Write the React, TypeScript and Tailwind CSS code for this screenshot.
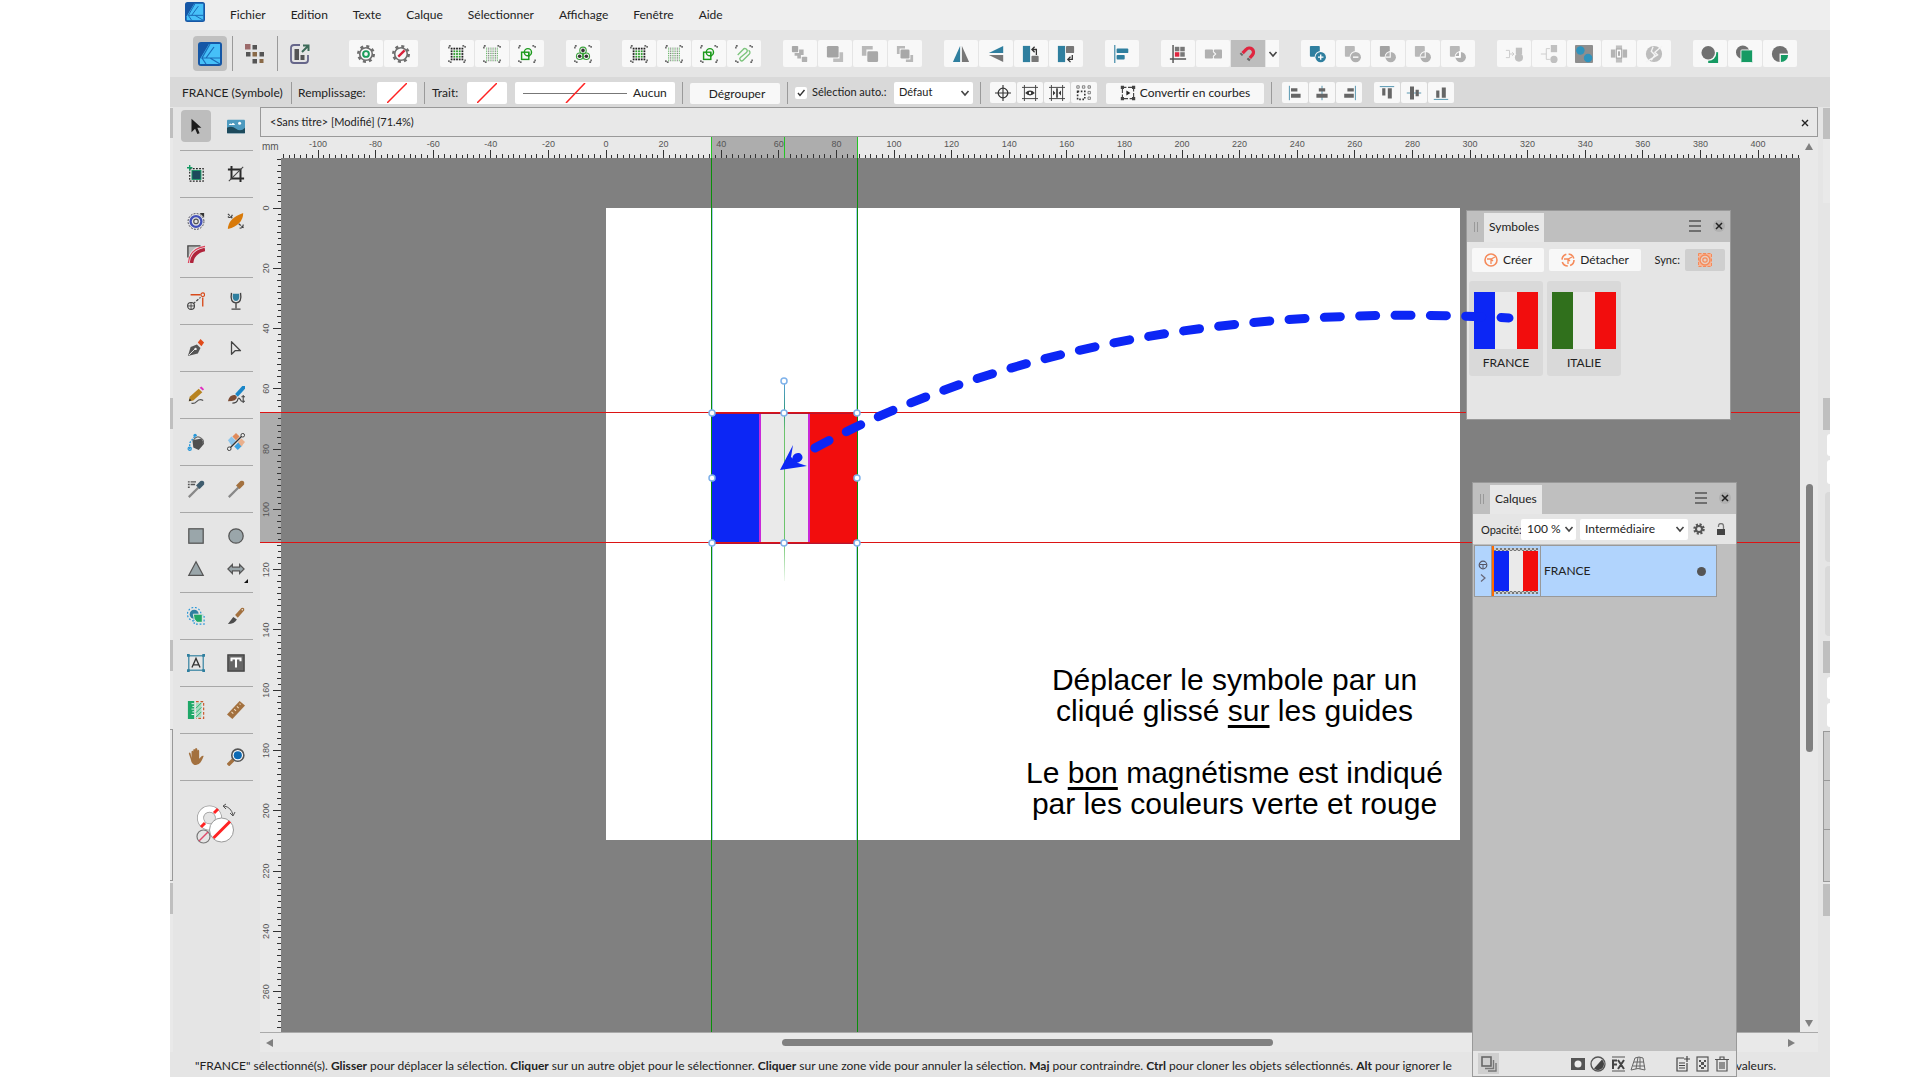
import React from "react";

type Kids = { children?: React.ReactNode };

/* ---------- drawing helpers ---------- */

function Svg({ children, size = "size-[18px]", box = 20 }: Kids & { size?: string; box?: number }) {
  return (
    <svg viewBox={`0 0 ${box} ${box}`} className={`${size} shrink-0`} fill="none" aria-hidden="true">
      {children}
    </svg>
  );
}

const GREY = "#b0b0b0";
const DARK = "#666666";
const TEAL = "#2f7f9f";

function Logo({ size }: { size: string }) {
  return (
    <Svg size={size} box={24}>
      <rect x="0" y="0" width="24" height="24" rx="3" fill="#1557a6" />
      <path d="M11 2 H22 V22 H2 V17 Z" fill="#46c0f8" />
      <path d="M12 2 L4 16 H22 M4 16 L8 22 M8 16 L16 5 M12 16 L22 22" stroke="#1a6cb8" strokeWidth="1.2" />
    </Svg>
  );
}

const Corners = () => (
  <path d="M1 4V1H4M16 1H19V4M19 16V19H16M4 19H1V16" stroke="#333" strokeWidth="1.3" strokeDasharray="2 1" />
);

function GridIcon({ light = false }: { light?: boolean }) {
  const n = [0, 1, 2, 3, 4];
  return (
    <Svg>
      <Corners />
      {light
        ? [0, 1, 2, 3, 4, 5, 6].map((i) => (
            <path key={i} d={`M${4 + i * 2} 3V18`} stroke={i % 2 ? "#555" : "#3aa13a"} strokeWidth="1" strokeDasharray="1 1" />
          ))
        : n.map((i) =>
            n.map((j) => (
              <rect
                key={`${i}-${j}`}
                x={4 + i * 3 - 1}
                y={4 + j * 3 - 1}
                width="2"
                height="2"
                fill={i > 0 && i < 4 && j > 0 && j < 4 ? "#2a9a2a" : "#222"}
              />
            )),
          )}
    </Svg>
  );
}

const ShapeSnap = () => (
  <Svg>
    <Corners />
    <rect x="4" y="8" width="8" height="8" stroke="#1c9a1c" strokeWidth="1.6" />
    <circle cx="11" cy="8" r="4" stroke="#1c9a1c" strokeWidth="1.6" />
    <path d="M12 8V13" stroke="#1c9a1c" strokeWidth="1.4" />
  </Svg>
);

const Gear = ({ bad = false }: { bad?: boolean }) => (
  <Svg>
    <circle cx="10" cy="10" r="8.5" stroke="#6e6e6e" strokeWidth="3" strokeDasharray="3.3 3.38" />
    <circle cx="10" cy="10" r="7" fill="#f8f8f8" stroke="#6e6e6e" strokeWidth="1.8" />
    {bad ? (
      <path d="M7 13L14 6" stroke="#d8203a" strokeWidth="2.6" />
    ) : (
      <circle cx="10" cy="10" r="3.2" stroke="#1a9c5b" strokeWidth="2.2" />
    )}
  </Svg>
);

const Clover = () => (
  <Svg>
    <Corners />
    <circle cx="10" cy="6" r="3.6" stroke="#3aa13a" strokeWidth="1.2" />
    <circle cx="6.3" cy="12.5" r="3.6" stroke="#3aa13a" strokeWidth="1.2" />
    <circle cx="13.7" cy="12.5" r="3.6" stroke="#3aa13a" strokeWidth="1.2" />
    <circle cx="10" cy="6" r="2" fill="#333" />
    <circle cx="6.3" cy="12.5" r="2" fill="#333" />
    <circle cx="13.7" cy="12.5" r="2" fill="#333" />
    <path d="M10 8V16" stroke="#3aa13a" />
  </Svg>
);

const Clip = () => (
  <Svg>
    <Corners />
    <path
      d="M3 11L9 5a2.5 2.5 0 0 1 4 3L6 14a2 2 0 0 0 3 3L16 10a2.5 2.5 0 0 0-1-4"
      stroke="#7cc47c"
      strokeWidth="1.5"
    />
  </Svg>
);

const Order = ({ kind }: { kind: number }) => (
  <Svg>
    {kind === 0 && (
      <>
        <rect x="1" y="1" width="7" height="7" rx="1" fill="#a8a8a8" />
        <path d="M4 9h5V5h5v6h-3v4H7v-3H4z" fill={GREY} />
        <rect x="12" y="13" width="6" height="6" rx="1" fill={GREY} />
      </>
    )}
    {kind === 1 && (
      <>
        <path d="M15 8h4v11H8v-4h7z" fill="#bdbdbd" />
        <rect x="1" y="1" width="13" height="13" rx="1.5" fill="#a4a4a4" />
      </>
    )}
    {kind === 2 && (
      <>
        <path d="M1 1h12v4H6v7H1z" fill="#b8b8b8" />
        <rect x="7" y="7" width="12" height="12" rx="1.5" fill="#a8a8a8" />
      </>
    )}
    {kind === 3 && (
      <>
        <path d="M1 1h9v3H4v6H1z" fill="#b8b8b8" />
        <rect x="5" y="5" width="10" height="10" rx="1.5" fill="#a8a8a8" />
        <path d="M16 11h3v8h-8v-3h5z" fill="#b8b8b8" />
      </>
    )}
  </Svg>
);

const FlipH = () => (
  <Svg>
    <path d="M9 1V19H1z" fill={TEAL} />
    <path d="M11 1V19H19z" fill="#777" />
  </Svg>
);
const FlipV = () => (
  <Svg>
    <path d="M18 1V9H2z" fill={TEAL} />
    <path d="M18 19V11H2z" fill="#777" />
  </Svg>
);
const RotL = () => (
  <Svg>
    <rect x="1" y="1" width="8" height="18" fill={TEAL} />
    <rect x="10.5" y="12" width="8" height="7" rx="1" fill="#777" />
    <path d="M12 5h4v6M14 2l-3 3 3 3" stroke="#333" strokeWidth="1.4" />
  </Svg>
);
const RotR = () => (
  <Svg>
    <rect x="1" y="1" width="8" height="18" fill={TEAL} />
    <rect x="10" y="1" width="9" height="8" rx="1" fill="#777" />
    <path d="M17 11v5h-4M15 13l-3 3 3 3" stroke="#333" strokeWidth="1.4" />
  </Svg>
);
const AlignMain = () => (
  <Svg>
    <path d="M2 0V20" stroke={TEAL} strokeWidth="1.2" />
    <rect x="4" y="4" width="13" height="5" rx="1" fill={TEAL} />
    <rect x="4" y="11" width="9" height="5" rx="1" fill={TEAL} />
  </Svg>
);
const PixelSnap = () => (
  <Svg>
    <path d="M4.5 0V20M1 15.5H19" stroke="#555" strokeWidth="1.6" />
    <rect x="6.5" y="2" width="5" height="5" fill="#777" />
    <rect x="12.5" y="2" width="5" height="5" fill="#777" />
    <rect x="12.5" y="8" width="5" height="5" fill="#777" />
    <rect x="6.5" y="8" width="5" height="5" fill="#e0253f" />
  </Svg>
);
const PixelMove = () => (
  <Svg>
    <rect x="1" y="5" width="9" height="10" rx="1" fill={GREY} />
    <rect x="11" y="5" width="9" height="10" rx="1" fill={GREY} />
    <path d="M10 7l3 3-3 3" fill="#b0b0b0" stroke="#f8f8f8" strokeWidth="1.2" />
  </Svg>
);
const Magnet = () => (
  <Svg>
    <path d="M4 9L8 5a4.500 4.500 0 0 1 7 6L12 14.500" stroke="#e0253f" strokeWidth="3.600" />
    <path d="M3.500 9.500L2 11M11.500 15L10 17" stroke="#666" strokeWidth="3.600" />
  </Svg>
);
const Chevron = () => (
  <svg viewBox="0 0 10 10" className="pointer-events-none size-2.5 shrink-0" fill="none" aria-hidden="true">
    <path d="M1.500 3L5 7L8.500 3" stroke="#444" strokeWidth="1.600" />
  </svg>
);

const Bool = ({ kind }: { kind: number }) => (
  <Svg>
    <rect x="1" y="1" width="11" height="12" rx="1" fill={kind === 0 ? TEAL : kind === 2 ? "#a2a2a2" : "#b8b8b8"} />
    <circle cx="13" cy="13.500" r="6.800" fill="#f8f8f8" />
    <circle cx="13" cy="13.500" r="5.800" fill={kind === 0 ? TEAL : "#b0b0b0"} />
    {kind === 0 && <path d="M13 10.500v6M10 13.500h6" stroke="#fff" strokeWidth="1.500" />}
    {kind === 1 && <path d="M10 13.500h6" stroke="#fff" strokeWidth="1.500" />}
    {kind > 1 && <path d="M7 13.500h5.500V7" stroke="#f8f8f8" strokeWidth="1.300" />}
    {kind === 4 && <path d="M12 7v6H7" stroke="#fff" strokeWidth="1.800" />}
  </Svg>
);

const Compound = ({ kind }: { kind: number }) => (
  <Svg>
    {kind === 0 && (
      <>
        <path d="M1 6h4v8H1M5 10h5M8 8l2 2-2 2" stroke="#c9c9c9" />
        <rect x="12" y="3" width="7" height="7" fill="#c0c0c0" />
        <circle cx="15.500" cy="14" r="4.500" fill="#c0c0c0" />
      </>
    )}
    {kind === 1 && (
      <>
        <path d="M1 10h6M11 4H7v12h4" stroke="#c9c9c9" />
        <rect x="12" y="0" width="7" height="8" fill="#c0c0c0" />
        <circle cx="15.500" cy="16" r="4" fill="#c0c0c0" />
      </>
    )}
    {kind === 2 && (
      <>
        <rect x="0" y="0" width="20" height="20" rx="1" fill="#8e8e8e" />
        <circle cx="6" cy="6" r="4.700" fill="#2f93bd" />
        <circle cx="14.500" cy="14.500" r="4.700" fill="#2f93bd" />
      </>
    )}
    {kind === 3 && (
      <>
        <rect x="6" y="0" width="8" height="20" fill="#c0c0c0" stroke="#f8f8f8" />
        <rect x="1" y="5" width="5" height="9" fill="#b4b4b4" />
        <rect x="14" y="5" width="5" height="9" fill="#b4b4b4" />
        <rect x="7" y="4.500" width="6" height="10" fill="#f8f8f8" stroke="#a4a4a4" />
        <rect x="9" y="7" width="2" height="5" fill="#a4a4a4" />
      </>
    )}
    {kind === 4 && (
      <>
        <circle cx="10" cy="10" r="9" fill="#bdbdbd" />
        <path d="M19 1L11 8l3 3L1 19M9 2L7 7l4 4-4 6" stroke="#f4f4f4" strokeWidth="1.500" />
      </>
    )}
  </Svg>
);

const Insert = ({ kind }: { kind: number }) => (
  <Svg>
    {kind === 0 && (
      <>
        <path d="M8 8h11v12H8z" fill="#159a63" />
        <circle cx="8.500" cy="9" r="8.500" fill="#f8f8f8" />
        <circle cx="8" cy="8.500" r="7.500" fill="#707070" />
      </>
    )}
    {kind === 1 && (
      <>
        <circle cx="7.500" cy="8" r="7.500" fill="#707070" />
        <rect x="5.500" y="5.500" width="13" height="14" rx="1" fill="#159a63" stroke="#f8f8f8" />
      </>
    )}
    {kind === 2 && (
      <>
        <circle cx="10" cy="10" r="9" fill="#707070" />
        <path d="M9.500 9.500H20V20H9.500z" fill="#f8f8f8" />
        <path d="M11 11h8a8 8 0 0 1-8 8z" fill="#159a63" />
      </>
    )}
  </Svg>
);

/* ---------- toolbar ---------- */

function ToolButton({ label, active, children }: Kids & { label: string; active?: boolean }) {
  return (
    <button
      type="button"
      aria-label={label}
      className={
        active
          ? "flex h-[27px] w-[34px] items-center justify-center bg-[#bdbdbd]"
          : "flex h-[27px] w-[34px] items-center justify-center rounded-[2px] bg-[#f8f8f8]"
      }
    >
      {children}
    </button>
  );
}

const Group = ({ children }: Kids) => <div className="flex gap-px">{children}</div>;
const Rule = ({ tall }: { tall?: boolean }) => (
  <div className={tall ? "h-[35px] w-px shrink-0 bg-[#9a9a9a]" : "h-[22px] w-px shrink-0 bg-[#9a9a9a]"} />
);

function Toolbar() {
  return (
    <div className="flex h-[47px] items-center bg-[#e5e5e5] pl-[23px]">
      <div className="flex w-[156px] shrink-0 items-center">
        <button type="button" aria-label="Persona Designer" className="flex h-[35px] w-[34px] items-center justify-center rounded-[4px] bg-[#c0c0c0]">
          <Logo size="size-6" />
        </button>
        <div className="ml-[5px] mr-3"><Rule tall /></div>
        <button type="button" aria-label="Persona Pixel">
          <Svg size="size-5">
            <rect x="0" y="0" width="5.500" height="5.500" fill="#9c6a6a" />
            <rect x="7.500" y="1" width="4.500" height="4.500" fill="#555" />
            <rect x="1" y="8" width="4.500" height="4.500" fill="#555" />
            <rect x="7.500" y="8" width="4.500" height="4.500" fill="#8a6a48" />
            <rect x="14.500" y="8" width="4.500" height="4.500" fill="#555" />
            <rect x="7.500" y="15" width="4.500" height="4.500" fill="#555" />
            <rect x="14.500" y="15" width="4" height="4" fill="#8a6a48" />
          </Svg>
        </button>
        <div className="ml-3 mr-3"><Rule tall /></div>
        <button type="button" aria-label="Persona Export">
          <Svg size="size-5">
            <path d="M10 1H4a3 3 0 0 0-3 3v12a3 3 0 0 0 3 3h11a3 3 0 0 0 3-3v-5" stroke="#66668a" strokeWidth="1.800" />
            <rect x="4.500" y="5" width="4.500" height="11" fill="#555" />
            <rect x="10.500" y="11" width="4" height="5" fill="#555" />
            <path d="M12 8L18 2M13 1.500h5.500V7" stroke="#3c6a58" strokeWidth="2" />
          </Svg>
        </button>
      </div>
      <div className="flex gap-[22px]">
        <Group>
          <ToolButton label="Paramètres"><Gear /></ToolButton>
          <ToolButton label="Réinitialiser"><Gear bad /></ToolButton>
        </Group>
        <Group>
          <ToolButton label="Aligner sur la grille"><GridIcon /></ToolButton>
          <ToolButton label="Grille fine"><GridIcon light /></ToolButton>
          <ToolButton label="Aligner sur les formes"><ShapeSnap /></ToolButton>
        </Group>
        <Group>
          <ToolButton label="Candidats"><Clover /></ToolButton>
        </Group>
        <Group>
          <ToolButton label="Déplacer sur la grille"><GridIcon /></ToolButton>
          <ToolButton label="Déplacer sur la grille fine"><GridIcon light /></ToolButton>
          <ToolButton label="Déplacer sur les formes"><ShapeSnap /></ToolButton>
          <ToolButton label="Joindre"><Clip /></ToolButton>
        </Group>
        <Group>
          <ToolButton label="Arrière-plan"><Order kind={0} /></ToolButton>
          <ToolButton label="Reculer"><Order kind={1} /></ToolButton>
          <ToolButton label="Avancer"><Order kind={2} /></ToolButton>
          <ToolButton label="Premier plan"><Order kind={3} /></ToolButton>
        </Group>
        <Group>
          <ToolButton label="Retourner horizontalement"><FlipH /></ToolButton>
          <ToolButton label="Retourner verticalement"><FlipV /></ToolButton>
          <ToolButton label="Pivoter à gauche"><RotL /></ToolButton>
          <ToolButton label="Pivoter à droite"><RotR /></ToolButton>
        </Group>
        <Group>
          <ToolButton label="Alignement"><AlignMain /></ToolButton>
        </Group>
        <Group>
          <ToolButton label="Forcer l'alignement des pixels"><PixelSnap /></ToolButton>
          <ToolButton label="Déplacer par pixels entiers"><PixelMove /></ToolButton>
          <ToolButton label="Magnétisme" active><Magnet /></ToolButton>
          <button type="button" aria-label="Options de magnétisme" className="flex h-[27px] w-[13px] items-center justify-center bg-[#f8f8f8]">
            <Chevron />
          </button>
        </Group>
        <Group>
          <ToolButton label="Ajouter"><Bool kind={0} /></ToolButton>
          <ToolButton label="Soustraire"><Bool kind={1} /></ToolButton>
          <ToolButton label="Intersecter"><Bool kind={2} /></ToolButton>
          <ToolButton label="Diviser"><Bool kind={3} /></ToolButton>
          <ToolButton label="Combiner"><Bool kind={4} /></ToolButton>
        </Group>
        <Group>
          <ToolButton label="Fusionner"><Compound kind={0} /></ToolButton>
          <ToolButton label="Séparer"><Compound kind={1} /></ToolButton>
          <ToolButton label="Composé"><Compound kind={2} /></ToolButton>
          <ToolButton label="Répartir"><Compound kind={3} /></ToolButton>
          <ToolButton label="Rompre"><Compound kind={4} /></ToolButton>
        </Group>
        <Group>
          <ToolButton label="Insérer derrière"><Insert kind={0} /></ToolButton>
          <ToolButton label="Insérer au-dessus"><Insert kind={1} /></ToolButton>
          <ToolButton label="Insérer à l'intérieur"><Insert kind={2} /></ToolButton>
        </Group>
      </div>
    </div>
  );
}

/* ---------- context bar ---------- */

const Small = ({ label, children }: Kids & { label: string }) => (
  <button type="button" aria-label={label} className="flex h-[21px] w-[26px] items-center justify-center rounded-[2px] bg-[#f8f8f8]">
    <Svg size="size-4">{children}</Svg>
  </button>
);

const Swatch = ({ label }: { label: string }) => (
  <button type="button" aria-label={label} className="flex h-[22px] w-10 items-center justify-center rounded-[2px] bg-white">
    <svg viewBox="0 0 20 20" className="size-5" fill="none" aria-hidden="true">
      <path d="M0 20L20 0" stroke="#f22" strokeWidth="1.500" />
    </svg>
  </button>
);

function ContextBar() {
  return (
    <div className="flex h-[30px] items-center whitespace-nowrap bg-[#d9d9d9] pl-3 pt-px">
      <span className="w-[109px]">FRANCE (Symbole)</span>
      <Rule />
      <span className="ml-1.5 w-[79px]">Remplissage:</span>
      <Swatch label="Remplissage" />
      <div className="mx-[7px]"><Rule /></div>
      <span className="w-[35px]">Trait:</span>
      <Swatch label="Trait" />
      <button type="button" className="ml-2 flex h-[22px] w-40 items-center rounded-[2px] bg-white pl-2">
        <svg viewBox="0 0 104 20" className="h-5 w-[104px]" fill="none" aria-hidden="true">
          <path d="M0 10.500H104" stroke="#777" />
          <path d="M43 20L62 0" stroke="#f22" strokeWidth="1.500" />
        </svg>
        <span className="ml-1.5">Aucun</span>
      </button>
      <div className="mx-[7px]"><Rule /></div>
      <button type="button" className="mt-px h-[21px] w-[90px] rounded-[2px] bg-[#f8f8f8] pl-1 leading-[21px]">Dégrouper</button>
      <div className="mx-[7px]"><Rule /></div>
      <label className="flex w-[99px] items-center gap-[5px] text-[11px]">
        <span className="relative flex size-3 shrink-0">
          <input type="checkbox" defaultChecked className="size-3 appearance-none rounded-[2px] bg-white" />
          <svg viewBox="0 0 12 12" className="pointer-events-none absolute inset-0 size-3" fill="none" aria-hidden="true">
            <path d="M3 6L5 8.500L9.500 3" stroke="#333" strokeWidth="1.400" />
          </svg>
        </span>
        Sélection auto.:
      </label>
      <div className="relative flex h-[22px] w-[79px] items-center rounded-[2px] bg-white">
        <select aria-label="Sélection auto." className="h-full w-full appearance-none bg-transparent pl-[5px] text-[11px]">
          <option>Défaut</option>
        </select>
        <div className="pointer-events-none absolute right-[3px]"><Chevron /></div>
      </div>
      <div className="mx-[7px]"><Rule /></div>
      <div className="ml-0.5 flex gap-px">
        <Small label="Centre de transformation">
          <circle cx="10" cy="10" r="6" stroke="#333" strokeWidth="1.600" />
          <path d="M10 0V20M0 10H20" stroke="#333" strokeWidth="1.400" />
        </Small>
        <Small label="Masquer la sélection">
          <path d="M3 0V20M17 0V20M0 3H20M0 17H20" stroke="#444" strokeWidth="1.200" />
          <path d="M4 10Q10 4 16 10Q10 16 4 10z" fill="#333" />
          <circle cx="10" cy="10" r="1.500" fill="#fff" />
        </Small>
        <Small label="Poignées d'alignement">
          <path d="M3 0V20M17 0V20M0 3H20M0 17H20" stroke="#444" strokeWidth="1.200" />
          <path d="M10 4V16" stroke="#333" strokeWidth="2" />
          <path d="M5 7l3 3-3 3zM15 7l-3 3 3 3z" fill="#333" />
        </Small>
        <Small label="Transformer séparément">
          <path d="M2 8H11V18H2z" stroke="#333" strokeWidth="2" strokeDasharray="2 2" />
          <path d="M1 1h3v3H1zM8 1h3v3H8zM15 1h3v3h-3zM15 8h3v3h-3zM15 15h3v3h-3z" stroke="#666" strokeWidth="1" />
        </Small>
      </div>
      <button type="button" className="ml-[9px] mt-px flex h-[21px] w-[158px] items-center justify-center gap-1 rounded-[2px] bg-[#f8f8f8]">
        <Svg size="size-4">
          <path d="M3 3H17V17H3z" stroke="#444" strokeWidth="1.400" strokeDasharray="5 2" />
          <path d="M1 1h4v4H1zM15 1h4v4h-4zM1 15h4v4H1zM15 15h4v4h-4z" fill="#444" />
          <path d="M8 7l5 3-5 3z" fill="#222" />
        </Svg>
        Convertir en courbes
      </button>
      <div className="mx-[7px]"><Rule /></div>
      <div className="ml-[3px] flex gap-px">
        <Small label="Aligner à gauche">
          <path d="M3 1V19" stroke={TEAL} /><path d="M5 4h8v4H5zM5 11h12v5H5z" fill={DARK} />
        </Small>
        <Small label="Centrer horizontalement">
          <path d="M10 1V19" stroke={TEAL} /><path d="M6 4h8v4H6zM3 11h14v5H3z" fill={DARK} />
        </Small>
        <Small label="Aligner à droite">
          <path d="M18 1V19" stroke={TEAL} /><path d="M8 4h8v4H8zM4 11h12v5H4z" fill={DARK} />
        </Small>
      </div>
      <div className="ml-3 flex gap-px">
        <Small label="Aligner en haut">
          <path d="M1 2H19" stroke={TEAL} /><path d="M4 4h4v9H4zM11 4h5v13h-5z" fill={DARK} />
        </Small>
        <Small label="Centrer verticalement">
          <path d="M1 10H19" stroke={TEAL} /><path d="M5 2h5v16H5zM12 6h4v8h-4z" fill={DARK} />
        </Small>
        <Small label="Aligner en bas">
          <path d="M1 18H19" stroke={TEAL} /><path d="M4 7h4v9H4zM11 3h5v13h-5z" fill={DARK} />
        </Small>
      </div>
    </div>
  );
}

/* ---------- tools ---------- */

const icons: Record<string, React.ReactNode> = {
  Déplacer: <path d="M5 2v15l4-4 2.500 6 2.500-1-2.500-6H16z" fill="#1c1c1c" />,
  Image: (
    <>
      <rect x="0" y="3" width="20" height="15" rx="1" fill="#4d9abf" />
      <path d="M0 12q5-3 10 1t10-1v6H0z" fill="#1d4a5c" />
      <path d="M2 9q1-3 3-1 2-3 4 1z" fill="#fff" />
      <circle cx="14" cy="7" r="1.700" fill="#fff" />
    </>
  ),
  "Plan de travail": (
    <>
      <rect x="3" y="4" width="15" height="14" stroke="#222" strokeWidth="1.300" strokeDasharray="2 1.500" />
      <rect x="5.500" y="6" width="10" height="10" fill="#1d4a5c" stroke="#159a63" />
      <path d="M3 0v6M0 3h6" stroke="#159a63" strokeWidth="1.500" />
    </>
  ),
  Rogner: (
    <>
      <path d="M5 1V15H19M1 5H15V19" stroke="#2a2a2a" strokeWidth="2.200" />
      <path d="M2 18L18 2" stroke="#444" strokeWidth="1.200" />
    </>
  ),
  Contour: (
    <>
      <circle cx="10" cy="10.500" r="8.800" stroke="#334" strokeDasharray="2 1.500" />
      <circle cx="10" cy="10.500" r="6" stroke="#4250b8" strokeWidth="2.600" />
      <circle cx="10" cy="10.500" r="2.500" stroke="#555" strokeWidth="1.300" />
      <path d="M14 1h5v5z" fill="#333" />
    </>
  ),
  Vrille: (
    <>
      <path d="M1 19Q1 7 18 1Q18 14 1 19z" fill="#d87a0a" />
      <path d="M1 5q3 3 5-2M14 18q4 0 4-4M1 2l5 5M13 13l6 5" stroke="#444" strokeWidth="1.300" strokeDasharray="3 1" />
    </>
  ),
  Coin: (
    <>
      <path d="M1 13V1H14Q6 3 1 13z" fill="#bbb" />
      <path d="M1 14V1H15" stroke="#444" strokeWidth="1.500" />
      <path d="M5 20Q6 8 20 5" stroke="#b0243c" strokeWidth="4" />
      <path d="M1.500 20Q3 4 20 1.500" stroke="#e0405a" strokeWidth="1.200" />
    </>
  ),
  Noeud: (
    <>
      <path d="M4 3H15M17.500 6V16" stroke="#d84a1a" strokeWidth="1.500" />
      <circle cx="17.500" cy="3" r="2" stroke="#d84a1a" strokeWidth="1.300" />
      <path d="M7 13L15 6" stroke="#444" strokeDasharray="3 1.500" strokeWidth="1.300" />
      <circle cx="4.500" cy="15.500" r="3.800" stroke="#444" strokeWidth="1.300" />
      <path d="M4.500 12v7M1 15.500h7" stroke="#444" />
    </>
  ),
  Transparence: (
    <>
      <path d="M5 1Q3 12 10 12Q17 12 15 1M10 12V18M5 19H15" stroke="#444" strokeWidth="1.500" />
      <path d="M6.500 2h7q1 8-3.500 8T6.500 2z" fill="#2f7f9f" />
    </>
  ),
  Plume: (
    <>
      <path d="M1 19L4 9L11 6L15 10L12 16z" fill="#555" />
      <path d="M2 18L9 11" stroke="#eee" />
      <circle cx="9.500" cy="11" r="1.300" fill="#eee" />
      <path d="M12 4l3-4 4 4-3 4z" fill="#e04a1a" />
    </>
  ),
  "Édition de nœuds": <path d="M5 3V17L9 13H15z" stroke="#444" strokeWidth="1.400" strokeLinejoin="round" />,
  Crayon: (
    <>
      <path d="M2 17L3 12L13 3L17 7L7 16z" fill="#b8831f" />
      <path d="M14 2l2-1.500 3 3L17.500 5z" fill="#e030c0" />
      <path d="M2 17l1-3 2 2z" fill="#333" />
      <path d="M5 19q3 1 6-2t7-1" stroke="#555" strokeWidth="1.300" />
    </>
  ),
  Pinceau: (
    <>
      <path d="M9 9L17 0h3v3L12 12z" fill="#1a86c8" />
      <path d="M1 17q2-8 8-7l2 2q0 5-10 5z" fill="#7d4c34" />
      <path d="M6 19q5 0 6-4t4 2M18 10v9M16 12h4M16 17h4" stroke="#444" strokeWidth="1.200" />
    </>
  ),
  Pot: (
    <>
      <path d="M6 8L16 6L19 12L13 19L7 16z" fill="#505050" />
      <path d="M7 8q4-6 9-2 4 3 1 6" stroke="#666" strokeWidth="1.300" />
      <path d="M3 18V11L10 2" stroke="#2596d8" strokeWidth="1.500" strokeDasharray="2 1.500" />
      <circle cx="3" cy="17.500" r="1.800" stroke="#2596d8" strokeWidth="1.300" />
      <circle cx="9" cy="2.500" r="1.800" fill="#2596d8" />
    </>
  ),
  Dégradé: (
    <>
      <path d="M1 8l4-4 5 5-5 5z" fill="#8cc4ea" />
      <path d="M8 15l5-5 4 4-5 5z" fill="#3aa0e0" />
      <path d="M6 4l4-4 4 4-4 4z" fill="#e08a5a" />
      <path d="M12 10l4-4 4 4-4 5z" fill="#eab08c" />
      <path d="M3 17L18 2" stroke="#333" strokeWidth="1.500" />
      <circle cx="2.500" cy="17.500" r="2" fill="#eee" stroke="#333" />
      <circle cx="17.500" cy="2.500" r="2" fill="#eee" stroke="#333" />
    </>
  ),
  "Pipette de style": (
    <>
      <path d="M1 2h2M4 2h6M1 5h2M4 5h5M1 8h2" stroke="#555" strokeWidth="1.500" />
      <path d="M2 19L13 8" stroke="#888" strokeWidth="2.500" />
      <path d="M10 6L15 1Q20 0 19 5L14 10z" fill="#3f5c6e" />
    </>
  ),
  Pipette: (
    <>
      <path d="M2 19L13 8" stroke="#888" strokeWidth="2.500" />
      <path d="M10 6L15 1Q20 0 19 5L14 10z" fill="#a3713f" />
    </>
  ),
  Rectangle: <rect x="2" y="2" width="16" height="16" fill="#9aa6aa" stroke="#555" strokeWidth="1.400" />,
  Ellipse: <circle cx="10" cy="10" r="8" fill="#9aa6aa" stroke="#555" strokeWidth="1.400" />,
  Triangle: <path d="M10 2L18 17H2z" fill="#9aa6aa" stroke="#555" strokeWidth="1.400" />,
  Flèche: <path d="M1 10L6 5V8H14V5L19 10L14 15V12H6V15z" fill="#9aa6aa" stroke="#555" strokeWidth="1.300" />,
  "Concepteur de formes": (
    <>
      <circle cx="8" cy="8" r="7.500" stroke="#2596d8" strokeWidth="1.300" strokeDasharray="2 2" />
      <path d="M8 9h11v10H8z" stroke="#2596d8" strokeWidth="1.300" strokeDasharray="2 2" />
      <circle cx="8" cy="8" r="5" fill="#2f7f9f" />
      <path d="M7 8h10v9H11Q7 14 7 8z" fill="#22a866" stroke="#eee" />
    </>
  ),
  Couteau: (
    <>
      <path d="M9 9L16 1Q20 0 19 4L12 12z" fill="#a3713f" />
      <path d="M1 19L7 11L11 14Q8 19 1 19z" fill="#4c4c4c" />
      <circle cx="17" cy="3" r=".800" fill="#eee" />
    </>
  ),
  "Texte artistique": (
    <>
      <rect x="2" y="2" width="16" height="16" stroke="#2f7f9f" strokeWidth="1.300" />
      <path d="M5.500 15L10 5L14.500 15M7 12H13" stroke="#333" strokeWidth="1.500" />
      <path d="M0 0h3v3H0zM17 0h3v3h-3zM0 17h3v3H0zM17 17h3v3h-3z" fill="#2f7f9f" />
    </>
  ),
  "Cadre de texte": (
    <>
      <rect x="1" y="1" width="18" height="18" fill="#666" stroke="#444" strokeWidth="1.500" />
      <path d="M5 8V5H15V8M10 5V15" stroke="#fff" strokeWidth="2.300" />
    </>
  ),
  Colonnes: (
    <>
      <path d="M1 0h7v20H1z" fill="#1fa868" />
      <path d="M8 3H5M8 6H6M8 9H5M8 12H6M8 15H5" stroke="#fff" />
      <path d="M10 2h6v16h-6z" fill="#a8dcc0" />
      <path d="M10 8l6-6M10 13l6-6M10 18l6-6" stroke="#1fa868" />
      <path d="M10 .700H18.500V19.300H10" stroke="#c85a2a" strokeWidth="1.300" strokeDasharray="3 2" />
    </>
  ),
  Mesure: (
    <>
      <path d="M0 15L14 0L20 5L6 20z" fill="#a3713f" />
      <path d="M5 12l2 2M8 9l2 2M11 6l2 2M14 3l1 1" stroke="#f0dcc0" strokeWidth="1.200" />
    </>
  ),
  Main: (
    <path
      d="M5 11V4q1-2 2 0v5V2q1-2 2 0v7V1q1-2 2.500 0v8V3q1-2 2 0v9l3-3q2-1 2 0Q15 19 10 19 5 19 4 12L2 6q1-2 2 0z"
      fill="#a3713f"
    />
  ),
  Zoom: (
    <>
      <path d="M1 19L7 13" stroke="#a3713f" strokeWidth="4" />
      <circle cx="12" cy="8" r="6.700" fill="#fff" stroke="#555" strokeWidth="1.800" />
      <circle cx="12" cy="8" r="4.500" fill="#0d6ab4" />
    </>
  ),
};

const toolGroups: (string | null)[][][] = [
  [["Plan de travail", "Rogner"]],
  [["Contour", "Vrille"], ["Coin", null]],
  [["Noeud", "Transparence"]],
  [["Plume", "Édition de nœuds"]],
  [["Crayon", "Pinceau"]],
  [["Pot", "Dégradé"]],
  [["Pipette de style", "Pipette"]],
  [["Rectangle", "Ellipse"], ["Triangle", "Flèche"]],
  [["Concepteur de formes", "Couteau"]],
  [["Texte artistique", "Cadre de texte"]],
  [["Colonnes", "Mesure"]],
  [["Main", "Zoom"]],
];

function Tool({ name, active }: { name: string; active?: boolean }) {
  return (
    <button
      type="button"
      aria-label={name}
      className={
        active
          ? "relative flex h-8 w-[30px] items-center justify-center rounded-[4px] bg-[#bdbdbd]"
          : "relative flex h-8 w-[30px] items-center justify-center"
      }
    >
      <Svg>{icons[name]}</Svg>
      {name === "Flèche" && (
        <svg viewBox="0 0 4 4" className="absolute bottom-0.5 right-[3px] size-1" aria-hidden="true">
          <path d="M4 0V4H0z" fill="#111" />
        </svg>
      )}
    </button>
  );
}

function Tools() {
  return (
    <nav aria-label="Outils" className="w-[87px] shrink-0 bg-[#e5e5e5] px-[7px] pt-[3px]">
      <div className="flex gap-2.5 border-b border-[#a8a8a8] pb-2 pl-px">
        <Tool name="Déplacer" active />
        <Tool name="Image" />
      </div>
      {toolGroups.map((rows, i) => (
        <div key={i} className="flex flex-col gap-px border-b border-[#a8a8a8] py-[7px] pl-px">
          {rows.map((row, j) => (
            <div key={j} className="flex gap-2.5">
              {row.map((n) => (n ? <Tool key={n} name={n} /> : null))}
            </div>
          ))}
        </div>
      ))}
      <button type="button" aria-label="Couleurs" className="ml-[16px] mt-[22px] block">
        <svg viewBox="0 0 40 42" className="h-[42px] w-10" fill="none" aria-hidden="true">
          <circle cx="13.500" cy="15" r="9" stroke="#999" strokeWidth="7" />
          <circle cx="13.500" cy="15" r="9" stroke="#fff" strokeWidth="5.500" />
          <path d="M5 24l4-4M18 10l4-4" stroke="#f22" strokeWidth="3" />
          <circle cx="25.500" cy="27" r="12" fill="#fff" stroke="#999" />
          <path d="M17.500 35L34 18.500" stroke="#f22" strokeWidth="3" />
          <circle cx="7.500" cy="33.500" r="6.500" fill="#e5e5e5" stroke="#777" strokeWidth="1.200" />
          <path d="M3 38L12 29" stroke="#e04a6a" strokeWidth="1.500" />
          <path d="M28 3Q35 4 37 12M30 1l-3 2 3 3M34 10l3 3 2-4" stroke="#555" />
        </svg>
      </button>
    </nav>
  );
}

/* ---------- docked panel edges ---------- */

function LeftEdge() {
  return (
    <div className="flex w-[3px] shrink-0 flex-col bg-[#e9e9e9] pt-px">
      <div className="h-[30px] bg-[#bfbfbf]" />
      <div className="mt-[260px] h-[31px] bg-[#bfbfbf]" />
      <div className="mt-[211px] h-[31px] bg-[#bfbfbf]" />
      <div className="mt-[58px] h-[152px] border-y border-r border-[#999]" />
      <div className="mt-0.5 h-[31px] bg-[#bfbfbf]" />
    </div>
  );
}

function RightEdge() {
  return (
    <div className="ml-[5px] flex w-[7px] shrink-0 flex-col bg-[#e5e5e5] pt-px">
      <div className="h-[31px] bg-[#bfbfbf]" />
      <div className="h-16 bg-[#e9e9e9]" />
      <div className="mt-[195px] h-8 bg-[#bfbfbf]" />
      <div className="ml-1 mt-1 h-[22px] rounded-l bg-white" />
      <div className="ml-1 mt-1 h-6 rounded-l bg-white" />
      <div className="ml-0.5 mt-2 h-[70px] rounded-l bg-[#d9d9d9]" />
      <div className="ml-0.5 mt-1 h-[70px] rounded-l bg-[#d9d9d9]" />
      <div className="mt-[5px] h-8 bg-[#bfbfbf]" />
      <div className="ml-1 mt-1 h-[22px] rounded-l bg-white" />
      <div className="ml-1 mt-1 h-6 rounded-l bg-white" />
      <div className="mt-1 h-[49px] border-l border-t border-[#999] bg-[#cccccc]" />
      <div className="h-[49px] border-l border-t border-[#999] bg-[#cccccc]" />
      <div className="h-[53px] border-y border-l border-[#999] bg-[#cccccc]" />
      <div className="mt-0.5 h-8 bg-[#bfbfbf]" />
    </div>
  );
}

/* ---------- rulers and canvas ---------- */

const H0 = 325;
const HS = 2.88;
const V0 = 50;
const VS = 3.014;

const range = (from: number, to: number, step: number) =>
  Array.from({ length: Math.floor((to - from) / step) + 1 }, (_, i) => from + i * step);

const tick = (v: number) => (v % 20 === 0 ? 8 : v % 4 === 0 ? 4 : 3);

function TopRuler() {
  return (
    <svg className="h-[21px] w-full overflow-hidden bg-[#e9e9e9]" shapeRendering="crispEdges" role="img" aria-label="Règle horizontale">
      <rect x="431" y="0" width="145" height="21" fill="#adadad" />
      {range(-112, 414, 2).map((v) => (
        <path key={v} d={`M${H0 + v * HS} 21v${-tick(v)}`} stroke="#333" />
      ))}
      {range(-100, 400, 20).map((v) => (
        <text key={v} x={H0 + v * HS} y="10" textAnchor="middle" fontSize="9" fill="#555" fontFamily="Liberation Sans, sans-serif">
          {v}
        </text>
      ))}
    </svg>
  );
}

function SideRuler() {
  return (
    <svg className="absolute inset-0 h-full w-[21px]" shapeRendering="crispEdges" role="img" aria-label="Règle verticale">
      <rect x="0" y="255" width="21" height="130" fill="#adadad" />
      {range(-16, 272, 2).map((v) => (
        <path key={v} d={`M21 ${V0 + v * VS}h${-tick(v)}`} stroke="#333" />
      ))}
      {range(0, 260, 20).map((v) => (
        <text
          key={v}
          transform={`translate(9 ${V0 + v * VS}) rotate(-90)`}
          textAnchor="middle"
          fontSize="9"
          fill="#555"
          fontFamily="Liberation Sans, sans-serif"
        >
          {v}
        </text>
      ))}
    </svg>
  );
}

function Selection() {
  const handles = [
    [452, 276], [524, 276], [597, 276], [452, 341], [597, 341], [452, 406], [524, 406], [597, 406], [524, 244],
  ];
  return (
    <svg className="pointer-events-none absolute inset-0 h-full w-full" fill="none" aria-hidden="true">
      <defs>
        <linearGradient id="axis" x1="0" y1="244" x2="0" y2="444" gradientUnits="userSpaceOnUse">
          <stop offset="0" stopColor="#5aa0d8" />
          <stop offset="0.160" stopColor="#2f9a7a" />
          <stop offset="0.250" stopColor="#6cc46c" />
          <stop offset="0.800" stopColor="#6cc46c" />
          <stop offset="1" stopColor="#6cc46c" stopOpacity="0.100" />
        </linearGradient>
      </defs>
      <path d="M452.500 71V276M452.500 407V703M596.500 71V276M596.500 407V703" stroke="#a8cdf0" shapeRendering="crispEdges" />
      <path d="M451.500 21V900M597.500 21V900" stroke="#0a8f0a" shapeRendering="crispEdges" />
      <path d="M451.500 0V21M524.500 0V21M597.500 0V21" stroke="#25c425" shapeRendering="crispEdges" />
      <path d="M0 275.500H1540M0 405.500H1540" stroke="#dc1414" shapeRendering="crispEdges" />
      <path d="M452 276.500H597M452 406.500H597" stroke="#b81432" shapeRendering="crispEdges" />
      <rect x="524" y="244" width="1" height="200" fill="url(#axis)" />
      {handles.map(([x, y]) => (
        <circle key={`${x}-${y}`} cx={x} cy={y} r="3" fill="#fff" stroke="#7fb2ea" strokeWidth="1.500" />
      ))}
    </svg>
  );
}

function Workspace() {
  return (
    <div className="flex min-w-0 flex-1 flex-col">
      <div className="flex h-[30px] items-center justify-between border border-[#999] bg-[#e8e8e8] pl-[9px] pr-[7px] pt-px text-[11px]">
        <span>&lt;Sans titre&gt; [Modifié] (71.4%)</span>
        <button type="button" aria-label="Fermer le document">
          <Svg size="size-2.5" box={10}><path d="M2 2L8 8M8 2L2 8" stroke="#222" strokeWidth="1.400" /></Svg>
        </button>
      </div>
      <div className="flex flex-1">
        <main className="relative grid min-w-0 flex-1 grid-cols-[21px_1fr] grid-rows-[21px_1fr] overflow-hidden">
          <div className="bg-[#e9e9e9] pl-0.5 pt-1 font-['Liberation_Sans',sans-serif] text-[10px] leading-3 text-[#555]">mm</div>
          <TopRuler />
          <div className="relative bg-[#e9e9e9]"><SideRuler /></div>
          <div className="relative bg-[#808080]">
            <div className="absolute left-[325px] top-[50px] flex h-[632px] w-[854px] items-end justify-end bg-white pb-[21px] pr-[17px]">
              <p className="whitespace-nowrap text-center font-['Liberation_Sans',Arial,sans-serif] text-[30px] leading-[31px] text-black">
                Déplacer le symbole par un
                <br />
                cliqué glissé <u className="underline-offset-4">sur</u> les guides
                <br />
                <br />
                Le <u className="underline-offset-4">bon</u> magnétisme est indiqué
                <br />
                par les couleurs verte et rouge
              </p>
            </div>
            <div className="absolute left-[431px] top-[255px] flex h-[130px] w-[145px]">
              <div className="flex-1 bg-[#0c26f5]" />
              <div className="flex-1 border-x-2 border-[#c828d8] bg-[#eaeaea]" />
              <div className="flex-1 bg-[#f20d0d]" />
            </div>
          </div>
          <Selection />
        </main>
        <div className="flex w-[18px] flex-col items-center justify-between bg-[#e9e9e9] pb-[5px] pt-1.5">
          <svg viewBox="0 0 8 7" className="h-[7px] w-2" aria-hidden="true"><path d="M4 0L8 7H0z" fill="#808080" /></svg>
          <div className="mt-[334px] h-[268px] w-[7px] rounded-full bg-[#808080]" />
          <div className="flex-1" />
          <svg viewBox="0 0 8 7" className="h-[7px] w-2" aria-hidden="true"><path d="M4 7L8 0H0z" fill="#808080" /></svg>
        </div>
      </div>
      <div className="flex h-5 items-center border-t border-[#aaa] bg-[#e9e9e9] pl-1.5 pr-[23px]">
        <svg viewBox="0 0 7 8" className="h-2 w-[7px]" aria-hidden="true"><path d="M0 4L7 0V8z" fill="#808080" /></svg>
        <div className="flex flex-1 pl-[509px]">
          <div className="h-[7px] w-[491px] rounded-full bg-[#808080]" />
        </div>
        <svg viewBox="0 0 7 8" className="h-2 w-[7px]" aria-hidden="true"><path d="M7 4L0 0V8z" fill="#808080" /></svg>
      </div>
    </div>
  );
}

/* ---------- floating panels ---------- */

const PanelHeader = ({ title }: { title: string }) => (
  <header className="flex h-[31px] shrink-0 items-end bg-[#bfbfbf]">
    <span className="mb-2.5 ml-[7px] flex h-2.5 w-1 justify-between border-x border-[#999]" />
    <h2 className="ml-1.5 flex h-[29px] items-center bg-[#e8e8e8] px-[5px] pb-0.5">{title}</h2>
    <button type="button" aria-label="Options du panneau" className="mb-2.5 ml-auto">
      <Svg size="size-3" box={12}><path d="M0 1H12M0 6H12M0 11H12" stroke="#555" strokeWidth="1.600" /></Svg>
    </button>
    <button type="button" aria-label="Fermer le panneau" className="mb-2.5 ml-3 mr-[5px] flex size-3 items-center justify-center rounded-full bg-[#b0b0b0]">
      <Svg size="size-2.5" box={10}><path d="M2 2L8 8M8 2L2 8" stroke="#222" strokeWidth="1.500" /></Svg>
    </button>
  </header>
);

const SymbolRing = ({ dashed }: { dashed?: boolean }) => (
  <Svg size="size-3.5" box={14}>
    <circle cx="7" cy="7" r="6" stroke="#f58a5a" strokeWidth="1.600" strokeDasharray={dashed ? "7 2.400" : undefined} />
    <path d="M3 6L7 6L11 4M7 6V11M7 6L9 8" stroke="#f58a5a" strokeWidth="1.300" />
  </Svg>
);

const Flag = ({ first, className }: { first: string; className: string }) => (
  <div className={`flex ${className}`}>
    <div className={`flex-1 ${first}`} />
    <div className="flex-1 bg-[#eaeaea]" />
    <div className="flex-1 bg-[#f20d0d]" />
  </div>
);

function SymbolsPanel() {
  const tile = "flex w-[74px] flex-col items-center rounded-[3px] bg-[#d9d9d9] pb-1 pt-[11px] leading-[18px]";
  return (
    <section aria-label="Symboles" className="absolute left-[1296px] top-[210px] h-[210px] w-[265px] border border-[#999] bg-[#e5e5e5]">
      <PanelHeader title="Symboles" />
      <div className="flex h-9 items-center pl-[5px] pr-[5px]">
        <button type="button" className="flex h-6 w-[72px] items-center justify-center gap-[5px] rounded-[2px] bg-[#f8f8f8]">
          <SymbolRing />Créer
        </button>
        <button type="button" className="ml-[5px] flex h-[22px] w-[92px] items-center justify-center gap-[5px] rounded-[2px] bg-[#f8f8f8]">
          <SymbolRing dashed />Détacher
        </button>
        <span className="ml-auto text-[11px]">Sync:</span>
        <button type="button" aria-label="Sync" aria-pressed="true" className="ml-[5px] flex h-[22px] w-10 items-center justify-center rounded-[2px] bg-[#cfcfcf]">
          <Svg size="size-3.5" box={14}>
            <rect x="0.500" y="0.500" width="13" height="13" fill="#f8b494" stroke="#f58a5a" strokeDasharray="3 1.500" />
            <circle cx="7" cy="7" r="5" fill="#e8cfc2" stroke="#f58a5a" strokeWidth="1.400" />
            <circle cx="7" cy="7" r="2.200" stroke="#f58a5a" strokeWidth="1.200" />
          </Svg>
        </button>
      </div>
      <div className="mt-[3px] flex gap-1 pl-0.5">
        <button type="button" className={tile}>
          <Flag first="bg-[#0c26f5]" className="mb-[5px] h-[57px] w-16" />FRANCE
        </button>
        <button type="button" className={tile}>
          <Flag first="bg-[#30701c]" className="mb-[5px] h-[57px] w-16" />ITALIE
        </button>
      </div>
    </section>
  );
}

const FootIcon = ({ label, children }: Kids & { label: string }) => (
  <button type="button" aria-label={label} className="flex size-5 items-center justify-center">
    <Svg size="size-4" box={16}>{children}</Svg>
  </button>
);

function LayersPanel() {
  return (
    <section aria-label="Calques" className="absolute bottom-0 left-[1302px] top-[482px] flex w-[265px] flex-col border border-[#999] bg-[#bfbfbf]">
      <PanelHeader title="Calques" />
      <div className="flex h-[30px] shrink-0 items-center bg-[#e5e5e5] pl-2">
        <label htmlFor="opacity" className="w-10 whitespace-nowrap pt-0.5 text-[11px]">Opacité:</label>
        <div className="relative flex h-[21px] w-[55px] items-center rounded-[2px] bg-white">
          <select id="opacity" className="h-full w-full appearance-none bg-transparent pl-1.5">
            <option>100 %</option>
          </select>
          <div className="pointer-events-none absolute right-0.5"><Chevron /></div>
        </div>
        <div className="relative ml-1 flex h-[21px] w-[108px] items-center rounded-[2px] bg-white">
          <select aria-label="Mode de fusion" className="h-full w-full appearance-none bg-transparent pl-[5px]">
            <option>Intermédiaire</option>
          </select>
          <div className="pointer-events-none absolute right-[3px]"><Chevron /></div>
        </div>
        <button type="button" aria-label="Options de fusion" className="ml-[5px]">
          <Svg size="size-3" box={12}>
            <circle cx="6" cy="6" r="4.500" stroke="#555" strokeWidth="2.500" strokeDasharray="2 1.530" />
            <circle cx="6" cy="6" r="3" stroke="#555" strokeWidth="2" />
          </Svg>
        </button>
        <button type="button" aria-label="Verrouiller" className="ml-2.5">
          <Svg size="size-3" box={12}>
            <rect x="2" y="6" width="8" height="6" fill="#444" />
            <path d="M3.500 4V3a2.500 2.500 0 0 1 5 0v3" stroke="#777" strokeWidth="1.300" />
          </Svg>
        </button>
      </div>
      <div className="ml-px mt-px flex h-[52px] w-[243px] shrink-0 border border-[#999] bg-[#b1d4fd]">
        <div className="flex w-4 flex-col items-center justify-center gap-1">
          <Svg size="size-2.5" box={10}>
            <circle cx="5" cy="5" r="3.800" stroke="#556" strokeWidth="1.200" /><path d="M2 4.500h6M5 4.500V8" stroke="#556" />
          </Svg>
          <Svg size="size-2" box={8}><path d="M2 0.500L6 4L2 7.500" stroke="#667" strokeWidth="1.200" /></Svg>
        </div>
        <div className="w-[3px] border-l border-[#999] bg-[#ff6a00]" />
        <div className="flex w-[47px] items-center border-r border-[#999]">
          <div className="w-11 bg-[repeating-conic-gradient(#777_0_25%,#ccc_0_50%)] bg-[length:4px_4px] py-[3px]">
            <Flag first="bg-[#0c26f5]" className="h-10 w-full" />
          </div>
        </div>
        <span className="ml-[3px] flex flex-1 items-center">FRANCE</span>
        <span className="mr-2.5 size-[9px] self-center rounded-full bg-[#555]" />
      </div>
      <div className="flex-1" />
      <footer className="flex h-[25px] shrink-0 items-center bg-[#e5e5e5] pl-[5px] pr-1">
        <button type="button" aria-label="Modifier tous les calques" className="flex size-[21px] items-center justify-center bg-[#cfcfcf]">
          <Svg size="size-4" box={16}>
            <rect x="1" y="1" width="9" height="9" stroke="#666" strokeWidth="1.600" />
            <path d="M12.500 4V12.500H4M15 7V15H7" stroke="#777" strokeWidth="1.400" />
          </Svg>
        </button>
        <div className="ml-auto mr-6 flex">
          <FootIcon label="Masque"><rect x="1" y="2" width="14" height="12" fill="#555" /><circle cx="8" cy="8" r="3.500" fill="#eee" /></FootIcon>
          <FootIcon label="Réglage"><circle cx="8" cy="8" r="7" stroke="#555" strokeWidth="1.300" /><path d="M12 3.500A6 6 0 1 1 4 12.500z" fill="#444" /></FootIcon>
          <FootIcon label="Effets">
            <path d="M2 1H15M2 15H15" stroke="#555" strokeWidth="1.200" />
            <path d="M3 13V4.500H7M3 8.500H7M8 4L14 13M14 4L8 13" stroke="#444" strokeWidth="2" />
          </FootIcon>
          <FootIcon label="Filtre dynamique">
            <path d="M5 2Q9 0 13 2L15 14Q8 11 1 14z" stroke="#666" /><path d="M8 1L6 13M10 1V13M4 6H14M3 10H15" stroke="#666" />
          </FootIcon>
        </div>
        <div className="flex">
          <FootIcon label="Nouveau calque"><path d="M10 2H3V15H13V7M5 7H11M5 9.500H11M5 12H11M13 0V6M10 3H16" stroke="#444" strokeWidth="1.200" /></FootIcon>
          <FootIcon label="Calque de pixels">
            <rect x="3" y="1" width="11" height="14" stroke="#555" strokeWidth="1.200" />
            <path d="M5 4h2v2H5zM10 4h2v2h-2zM7 6h3v3H7zM5 9h2v2H5zM10 9h2v2h-2zM7 11h3v2H7z" fill="#555" />
          </FootIcon>
          <FootIcon label="Supprimer"><path d="M1 3.500H15M6 3V1H10V3M3 4V15H13V4M6 6V13M8 6V13M10 6V13" stroke="#555" strokeWidth="1.200" /></FootIcon>
        </div>
      </footer>
    </section>
  );
}

const menus = ["Fichier", "Edition", "Texte", "Calque", "Sélectionner", "Affichage", "Fenêtre", "Aide"];

export default function App() {
  return (
    <div className="min-h-screen bg-white pb-[3px] pl-[170px] pr-[90px] font-['Lato','Segoe_UI',sans-serif] text-xs text-[#222]">
      <div className="relative flex min-h-[1077px] flex-col overflow-hidden bg-[#e5e5e5]">
        <nav aria-label="Menu principal" className="flex h-[30px] items-center bg-[#eeeeee] pl-[15px]">
          <div className="mb-1.5 mr-[25px]"><Logo size="size-5" /></div>
          <div className="flex gap-[25px]">
            {menus.map((m) => (
              <button key={m} type="button">{m}</button>
            ))}
          </div>
        </nav>
        <Toolbar />
        <ContextBar />
        <div className="flex flex-1">
          <LeftEdge />
          <Tools />
          <Workspace />
          <RightEdge />
        </div>
        <footer className="flex h-[25px] items-center whitespace-nowrap pl-[25px] pr-[54px] pt-0.5">
          <p>
            "FRANCE" sélectionné(s). <b>Glisser</b> pour déplacer la sélection. <b>Cliquer</b> sur un autre objet pour le
            sélectionner. <b>Cliquer</b> sur une zone vide pour annuler la sélection. <b>Maj</b> pour contraindre.{" "}
            <b>Ctrl</b> pour cloner les objets sélectionnés. <b>Alt</b> pour ignorer le
          </p>
          <span className="ml-auto">valeurs.</span>
        </footer>
        <SymbolsPanel />
        <LayersPanel />
        <svg className="pointer-events-none absolute inset-0 h-full w-full" fill="none" aria-hidden="true">
          <path
            d="M1339 318C1100 305 840 336 627 458"
            stroke="#0c26f5"
            strokeWidth="9"
            strokeLinecap="round"
            strokeDasharray="16 19.350"
            strokeDashoffset="8"
          />
          <path d="M610 470L623 445L621 457L628 463L637 466z" fill="#0c26f5" />
        </svg>
      </div>
    </div>
  );
}
